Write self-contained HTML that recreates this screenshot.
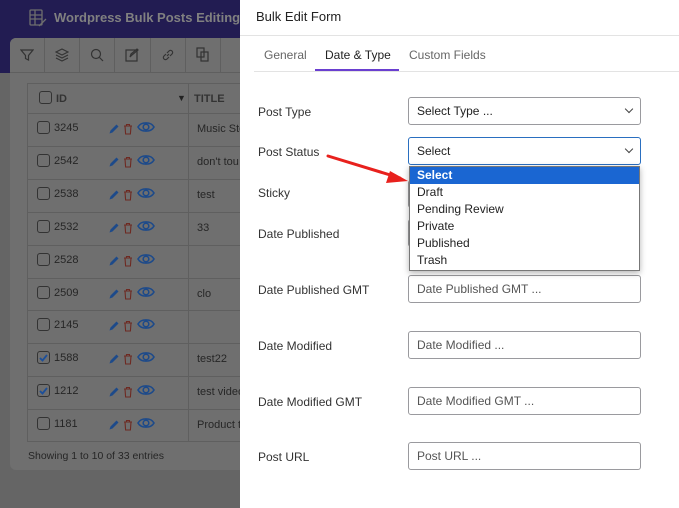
<!DOCTYPE html>
<html><head><style>
*{margin:0;padding:0;box-sizing:border-box}
body{width:679px;height:508px;overflow:hidden;position:relative;background:#656565;font-family:"Liberation Sans",sans-serif;font-size:12px}
.a{position:absolute}
.hdr{left:0;top:0;width:240px;height:73px;background:#221c52}
.tb{left:10px;top:38px;width:240px;height:35px;background:#6f6f6f;border-bottom:1px solid #5f5f5f;border-radius:6px 0 0 0}
.tbc{top:38px;width:1px;height:35px;background:#5f5f5f}
.tbl{left:27px;top:83px;width:230px;height:359px;border:1px solid #5f5f5f;background:#6f6f6f}
.row{left:28px;width:212px;height:1px;background:#5f5f5f}
.cb{width:13px;height:13px;border:1px solid #333;border-radius:3px}
.t{color:#262626;font-size:11px}
.panel{left:240px;top:0;width:439px;height:508px;background:#fff}
.lbl{left:258px;color:#333;font-size:12px}
.inp{left:408px;width:233px;height:28px;border:1px solid #9a9a9e;border-radius:3px;color:#555;font-size:12px;padding:6px 8px;background:#fff}
.chev{position:absolute;right:8px;top:8px;width:6px;height:6px;border-right:1.3px solid #444;border-bottom:1.3px solid #444;transform:rotate(45deg)}
.dd{left:409px;top:166px;width:231px;height:105px;border:1px solid #777;background:#fff;box-shadow:0 2px 6px rgba(0,0,0,.3)}
.dd div{height:17px;line-height:17px;padding-left:7px;color:#222;font-size:12px}
</style></head><body>
<div class="a hdr"></div>
<svg class="a" style="left:28px;top:8px" width="20" height="20" viewBox="0 0 20 20" fill="none" stroke="#6e6e6e" stroke-width="1.3"><rect x="2" y="2" width="12" height="15" rx="1"/><path d="M2 7h12M2 11h12M7 2v15M11 18l7-7"/></svg>
<div class="a" style="left:54px;top:10px;color:#808080;font-weight:bold;font-size:13px;white-space:nowrap">Wordpress Bulk Posts Editing</div>
<div class="a" style="left:10px;top:38px;width:240px;height:432px;background:#6f6f6f;border-radius:6px"></div>
<div class="a tb"></div>
<div class="a tbc" style="left:44px"></div><div class="a tbc" style="left:79px"></div><div class="a tbc" style="left:114px"></div><div class="a tbc" style="left:150px"></div><div class="a tbc" style="left:185px"></div><div class="a tbc" style="left:220px"></div>
<svg class="a" style="left:20px;top:48px" width="14" height="14" viewBox="0 0 14 14" fill="none" stroke="#333" stroke-width="1.2"><path d="M1 2h12L8.5 7.5V12L5.5 10.5V7.5z"/></svg>
<svg class="a" style="left:55px;top:48px" width="14" height="14" viewBox="0 0 14 14" fill="none" stroke="#333" stroke-width="1.2"><path d="M7 1l6 3-6 3-6-3z M1 7l6 3 6-3 M1 10l6 3 6-3"/></svg>
<svg class="a" style="left:90px;top:48px" width="14" height="14" viewBox="0 0 14 14" fill="none" stroke="#333" stroke-width="1.2"><circle cx="6" cy="6" r="4.5"/><path d="M9.5 9.5L13 13"/></svg>
<svg class="a" style="left:125px;top:48px" width="14" height="14" viewBox="0 0 14 14" fill="none" stroke="#333" stroke-width="1.2"><rect x="1" y="2" width="11" height="11"/><path d="M5 9l1-3 6-5 1 1-6 5z"/></svg>
<svg class="a" style="left:161px;top:48px" width="14" height="14" viewBox="0 0 14 14" fill="none" stroke="#333" stroke-width="1.2"><path d="M6 8L8 6M5 6L3 8a2 2 0 003 3l2-2M9 8l2-2a2 2 0 00-3-3L6 5"/></svg>
<svg class="a" style="left:196px;top:47px" width="14" height="15" viewBox="0 0 14 15" fill="none" stroke="#333" stroke-width="1.2"><rect x="1" y="1" width="7" height="9"/><rect x="5" y="5" width="7" height="9"/></svg>
<div class="a tbl"></div>
<div class="a" style="left:188px;top:83px;width:1px;height:359px;background:#5f5f5f"></div>
<div class="a row" style="top:113px"></div>
<div class="a cb" style="left:39px;top:91px"></div>
<div class="a t" style="left:56px;top:93px;font-weight:bold;color:#333">ID</div>
<div class="a" style="left:177px;top:93px;font-size:9px;color:#222">▼</div>
<div class="a t" style="left:194px;top:93px;font-weight:bold;color:#333">TITLE</div>
<div class="a" style="left:28px;top:450px;font-size:10.5px;color:#262626">Showing 1 to 10 of 33 entries</div>

<div id="rows"></div>
<script>
var d=[["3245","Music Sto",0],["2542","don't tou",0],["2538","test",0],["2532","33",0],["2528","",0],["2509","clo",0],["2145","",0],["1588","test22",1],["1212","test video",1],["1181","Product t",0]];
var h="";
for(var i=0;i<10;i++){var y=113+i*32.9;
if(i>0)h+='<div class="a row" style="top:'+y+'px"></div>';
h+='<div class="a cb" style="left:37px;top:'+(y+8)+'px">'+(d[i][2]?'<svg width="11" height="11" style="position:absolute;left:0;top:0"><path d="M2 6l2.5 2.5L9 3" stroke="#1c4f9a" stroke-width="1.8" fill="none"/></svg>':'')+'</div>';
h+='<div class="a t" style="left:54px;top:'+(y+9)+'px">'+d[i][0]+'</div>';
h+='<svg class="a" style="left:108px;top:'+(y+10)+'px" width="12" height="12"><path d="M1.5 10.5l1-3 6-6 2 2-6 6z" fill="#1d4a8a"/></svg>';
h+='<svg class="a" style="left:123px;top:'+(y+10)+'px" width="10" height="12"><path d="M1 3h8M3.5 3V1.5h3V3M2 3l.6 8h4.8L8 3" stroke="#6e2a22" stroke-width="1.1" fill="none"/></svg>';
h+='<svg class="a" style="left:137px;top:'+(y+6)+'px" width="18" height="16"><path d="M1 8C4 2.5 14 2.5 17 8C14 13.5 4 13.5 1 8z" stroke="#1d4a8a" stroke-width="1.6" fill="none"/><circle cx="9" cy="8" r="2.8" stroke="#1d4a8a" stroke-width="1.6" fill="none"/></svg>';
h+='<div class="a t" style="left:197px;top:'+(y+10)+'px;white-space:nowrap;width:43px;overflow:hidden">'+d[i][1]+'</div>';}
document.getElementById("rows").innerHTML=h;
</script>

<div class="a panel"></div>
<div class="a" style="left:256px;top:9px;font-size:13px;color:#222">Bulk Edit Form</div>
<div class="a" style="left:240px;top:35px;width:439px;height:1px;background:#e3e3e3"></div>
<div class="a" style="left:264px;top:48px;color:#666;font-size:12px">General</div>
<div class="a" style="left:325px;top:48px;color:#222;font-size:12px">Date &amp; Type</div>
<div class="a" style="left:409px;top:48px;color:#666;font-size:12px">Custom Fields</div>
<div class="a" style="left:254px;top:71px;width:425px;height:1px;background:#e3e3e3"></div>
<div class="a" style="left:315px;top:69px;width:84px;height:2px;background:#6a3fd0"></div>

<div class="a lbl" style="top:105px">Post Type</div>
<div class="a lbl" style="top:145px">Post Status</div>
<div class="a lbl" style="top:186px">Sticky</div>
<div class="a lbl" style="top:227px">Date Published</div>
<div class="a lbl" style="top:283px">Date Published GMT</div>
<div class="a lbl" style="top:339px">Date Modified</div>
<div class="a lbl" style="top:395px">Date Modified GMT</div>
<div class="a lbl" style="top:450px">Post URL</div>

<div class="a inp" style="top:97px;color:#222">Select Type ...<span class="chev"></span></div>
<div class="a inp" style="top:137px;color:#222;border-color:#2a6fc0">Select<span class="chev"></span></div>
<div class="a inp" style="top:180px;left:408px;width:10px"></div>
<div class="a inp" style="top:219px;left:408px;width:10px"></div>
<div class="a inp" style="top:275px">Date Published GMT ...</div>
<div class="a inp" style="top:331px">Date Modified ...</div>
<div class="a inp" style="top:387px">Date Modified GMT ...</div>
<div class="a inp" style="top:442px">Post URL ...</div>

<div class="a dd">
<div style="background:#1a66d2;color:#fff;font-weight:bold">Select</div>
<div>Draft</div><div>Pending Review</div><div>Private</div><div>Published</div><div>Trash</div>
</div>
<svg class="a" style="left:320px;top:150px" width="90" height="36"><path d="M8 6L80 28" stroke="#e8211d" stroke-width="3" stroke-linecap="round"/><path d="M88 31L70 21L66 33z" fill="#e8211d"/></svg>
</body></html>
